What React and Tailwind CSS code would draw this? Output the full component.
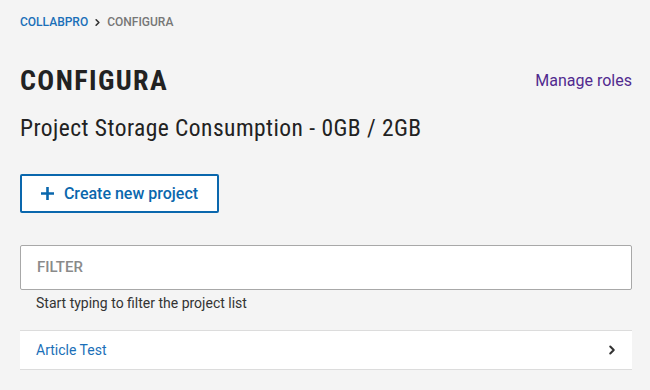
import { ChevronRight } from "lucide-react";

const App = () => {
  return (
    <div className="min-h-[390px] w-[650px] bg-[#f4f4f4] pl-5 pr-[18px] font-['Roboto',sans-serif] text-[#222]">
      {/* Breadcrumb */}
      <div className="flex items-center gap-[4px] pt-[15px] text-[12px] font-medium uppercase leading-[14px]">
        <span className="text-[#1a6fb8]">CollabPro</span>
        <ChevronRight size={11} strokeWidth={3.5} className="text-[#333]" />
        <span className="text-[#777]">Configura</span>
      </div>

      {/* Heading */}
      <div className="mt-[38px] flex items-start justify-between">
        <h1 className="font-['Roboto_Condensed','Roboto',sans-serif] text-[28px] font-bold leading-[28px] tracking-[1.4px] text-[#222]">
          CONFIGURA
        </h1>
        <a className="mt-[5px] text-[16px] leading-[18px] text-[#512a8f]">Manage roles</a>
      </div>

      <h2 className="mt-[21px] font-['Roboto_Condensed','Roboto',sans-serif] text-[23.5px] leading-[24px] tracking-[0.45px] text-[#222]">
        Project Storage Consumption - 0GB / 2GB
      </h2>

      {/* Create button */}
      <button className="mt-[34px] flex h-[39px] w-[199px] items-center justify-center gap-[10px] rounded-[2px] border-2 border-[#0a67ad] bg-white text-[16px] font-medium text-[#0a67ad]">
        <svg width="13" height="13" viewBox="0 0 13 13" fill="none" stroke="currentColor" strokeWidth="2.6">
          <path d="M6.5 0v13M0 6.5h13" />
        </svg>
        Create new project
      </button>

      {/* Filter */}
      <div className="mt-[32px] flex h-[45px] items-center rounded-[2px] border border-[#a8a8a8] bg-white px-4">
        <span className="text-[15px] font-medium text-[#8a8a8a]">FILTER</span>
      </div>
      <p className="mt-[5px] px-4 text-[14px] leading-[16px] text-[#333]">Start typing to filter the project list</p>

      {/* Project list */}
      <div className="mt-[19px] flex h-[40px] items-center justify-between border-y border-[#dcdcdc] bg-white pl-4 pr-[13px]">
        <span className="text-[14px] text-[#1a6fb8]">Article Test</span>
        <ChevronRight size={14} strokeWidth={3.5} className="text-[#333]" />
      </div>
    </div>
  );
};

export default App;
